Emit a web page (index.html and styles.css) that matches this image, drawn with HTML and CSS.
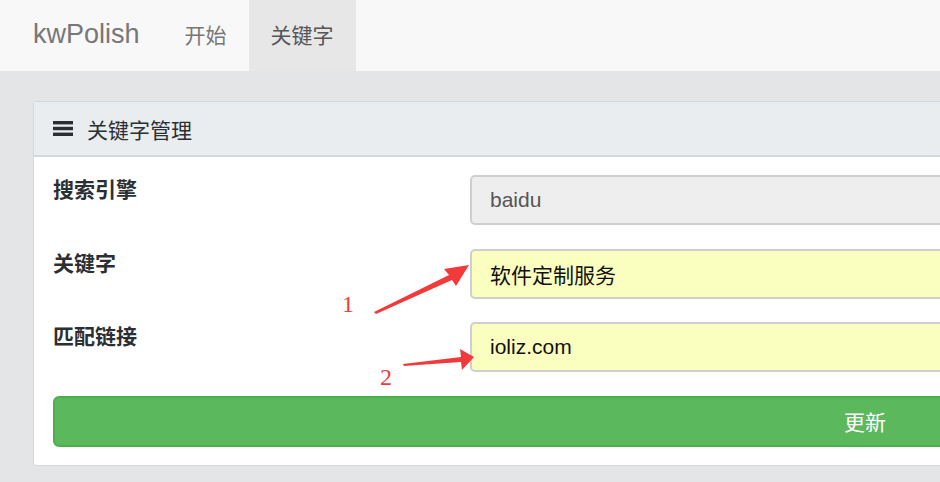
FILE: index.html
```html
<!DOCTYPE html>
<html lang="zh">
<head>
<meta charset="utf-8">
<title>kwPolish</title>
<link rel="stylesheet" href="styles.css">
</head>
<body>
<nav class="navbar">
  <span class="brand">kwPolish</span>
  <a class="nav-item">开始</a>
  <a class="nav-item active">关键字</a>
</nav>
<main class="main">
  <section class="panel">
    <header class="panel-heading">
      <svg class="menu-icon" width="20" height="15" viewBox="0 0 20 15"><rect x="0" y="0" width="20" height="3.4" fill="#2b2f33"/><rect x="0" y="5.8" width="20" height="3.4" fill="#2b2f33"/><rect x="0" y="11.6" width="20" height="3.4" fill="#2b2f33"/></svg>
      <span>关键字管理</span>
    </header>
    <div class="panel-body">
      <div class="form-row">
        <label class="label">搜索引擎</label>
        <div class="input readonly">baidu</div>
      </div>
      <div class="form-row">
        <label class="label">关键字</label>
        <div class="input filled">软件定制服务</div>
      </div>
      <div class="form-row">
        <label class="label">匹配链接</label>
        <div class="input filled">ioliz.com</div>
      </div>
      <button class="btn">更新</button>
    </div>
  </section>
</main>
<svg class="annot" width="940" height="482" viewBox="0 0 940 482">
  <polygon points="374,312 449,275 444,269 469,265 456,286 452,280 376,314" fill="#f33a3a"/>
  <polygon points="403,364 461,357 460,349 474,357 462,370 461,362 404,366" fill="#f33a3a"/>
  <text x="342" y="312" class="num">1</text>
  <text x="380" y="385" class="num">2</text>
</svg>
</body>
</html>
```
FILE: styles.css
```css
html, body {
  margin: 0;
  padding: 0;
}
body {
  width: 940px;
  height: 482px;
  overflow: hidden;
  background: #e4e5e6;
  font-family: "Liberation Sans", "Noto Sans CJK SC", sans-serif;
  position: relative;
}
.navbar {
  height: 71px;
  background: #f8f8f8;
  display: flex;
  align-items: stretch;
  padding-left: 33px;
}
.brand {
  font-size: 27px;
  color: #777;
  display: flex;
  align-items: center;
  margin-right: 23px;
  padding-bottom: 3px;
}
.nav-item {
  font-size: 21px;
  color: #777;
  padding: 0 22px;
  display: flex;
  align-items: center;
  padding-bottom: 3px;
}
.nav-item.active {
  background: #e7e7e7;
  color: #555;
}
.main {
  padding: 30px 0 0 33px;
  width: 907px;
  height: 381px;
  overflow: hidden;
}
.panel {
  width: 1664px;
  background: #fff;
  border: 1px solid #d2d9de;
  border-radius: 3px;
  box-sizing: border-box;
}
.panel-heading {
  height: 53px;
  background: #e9edf0;
  border-bottom: 2px solid #d2d9de;
  display: flex;
  align-items: center;
  padding-left: 19px;
  font-size: 21px;
  color: #2b2f33;
}
.menu-icon {
  margin-right: 14px;
}
.panel-body {
  padding: 18px 19px 18px 19px;
}
.form-row {
  display: grid;
  grid-template-columns: 417px 1fr;
  margin-bottom: 23.5px;
}
.label {
  font-size: 21px;
  font-weight: bold;
  color: #2b2f33;
  line-height: 30px;
}
.input {
  height: 50px;
  box-sizing: border-box;
  border: 2px solid #cfcfcf;
  border-radius: 5px;
  padding: 0 18px;
  display: flex;
  align-items: center;
  font-size: 21px;
}
.input.readonly {
  background: #eeeeee;
  color: #555;
}
.input.filled {
  background: #fafebe;
  color: #111;
}
.btn {
  display: block;
  width: 100%;
  height: 51px;
  margin-top: 0;
  background: #5cb85c;
  border: 2px solid #4cae4c;
  border-radius: 6px;
  color: #fff;
  font-size: 21px;
  font-family: "Liberation Sans", "Noto Sans CJK SC", sans-serif;
}
.annot {
  position: absolute;
  left: 0;
  top: 0;
  pointer-events: none;
}
.num {
  font-family: "Liberation Serif", serif;
  font-size: 24px;
  fill: #f33a3a;
}
```
